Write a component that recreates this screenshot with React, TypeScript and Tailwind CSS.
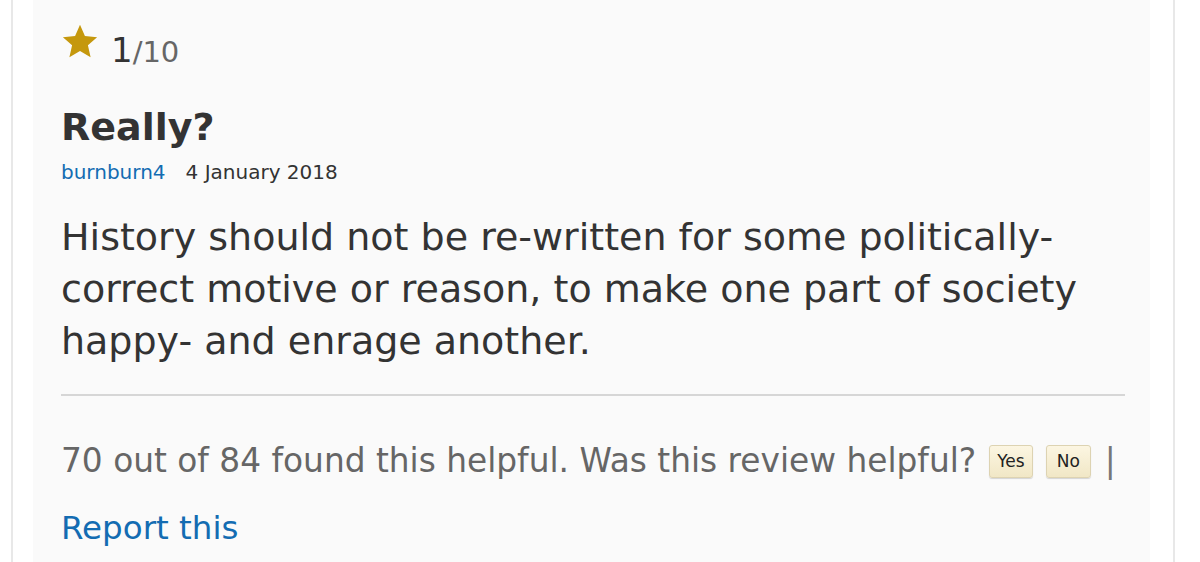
export default function App() {
  return (
    <div
      className="h-[562px] w-[1200px] overflow-hidden bg-white pl-[11px]"
      style={{ fontFamily: '"DejaVu Sans", Verdana, sans-serif' }}
    >
      <div className="flex h-full w-[1164px] border-x-2 border-[#e8e8e8] pl-[20px] pr-[23px]">
        <div className="flex-1 bg-[#fafafa] pl-[28px] pr-[25px] pt-[22px]">
          <div className="flex items-start gap-[12px]">
            <svg viewBox="0 0 24 24" className="h-[38px] w-[38px]" fill="#c5980d">
              <path d="M12 1.8l3.1 7.1 7.7.7-5.8 5.1 1.7 7.6L12 18.3l-6.7 4 1.7-7.6-5.8-5.1 7.7-.7z" />
            </svg>
            <div className="pt-[3px] text-[#333]">
              <span className="text-[34px]">1</span>
              <span className="text-[29px] text-[#666]">/10</span>
            </div>
          </div>

          <h2 className="mt-[29px] text-[38px] font-bold leading-[44px] text-[#333]">Really?</h2>

          <div className="mt-[8px] flex gap-[20px] text-[20px] text-[#333]">
            <a className="text-[#136cb2]">burnburn4</a>
            <span>4 January 2018</span>
          </div>

          <p className="mt-[24px] text-[38px] leading-[52px] text-[#333]">
            History should not be re-written for some politically-correct motive or reason, to make one part of
            society happy- and enrage another.
          </p>

          <div className="mt-[27px] border-t-2 border-[#d6d6d6]" />

          <div className="mt-[41px] flex items-center text-[32.8px] text-[#666]">
            <span>70 out of 84 found this helpful. Was this review helpful?</span>
            <button className="ml-[13px] rounded-[3px] border border-[#ddd3b2] bg-gradient-to-b from-[#fcf6e2] to-[#f1e7c6] px-[7px] py-[5px] text-[17px] leading-[21px] text-[#222] shadow-[0_1px_1px_rgba(0,0,0,0.15)]">
              Yes
            </button>
            <button className="ml-[13px] rounded-[3px] border border-[#ddd3b2] bg-gradient-to-b from-[#fcf6e2] to-[#f1e7c6] px-[10px] py-[5px] text-[17px] leading-[21px] text-[#222] shadow-[0_1px_1px_rgba(0,0,0,0.15)]">
              No
            </button>
            <span className="ml-[14px] text-[#777]">|</span>
          </div>

          <a className="mt-[18px] block text-[32.5px] text-[#136cb2]">Report this</a>
        </div>
      </div>
    </div>
  );
}
